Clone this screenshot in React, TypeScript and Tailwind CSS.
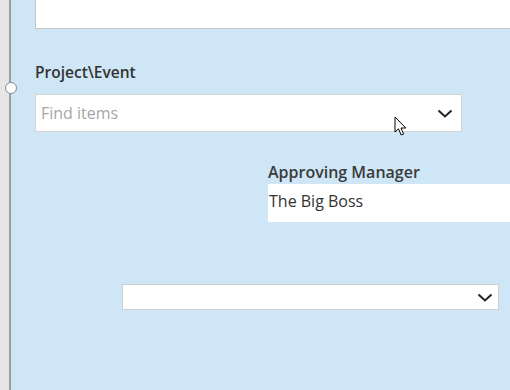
import React from "react";

function Chevron({ className }: { className?: string }) {
  return (
    <svg viewBox="0 0 16 9" className={className} fill="none">
      <path d="M1.5 1.5 L8 7.5 L14.5 1.5" stroke="#222" strokeWidth="2" />
    </svg>
  );
}

function Cursor() {
  return (
    <svg width="14" height="22" viewBox="0 0 14 22" className="absolute left-[394px] top-[116px]">
      <path
        d="M1 1 L1 16 L4.5 12.8 L7.2 19 L9.6 18 L7 12 L11.8 12 Z"
        fill="#fff"
        stroke="#000"
        strokeWidth="1"
        strokeLinejoin="round"
      />
    </svg>
  );
}

export default function App() {
  return (
    <div
      className="relative flex h-[390px] w-[510px] overflow-hidden bg-[#cee6f6] text-[#333]"
      style={{ fontFamily: '"Open Sans", "Noto Sans", sans-serif' }}
    >
      {/* left rail */}
      <div className="w-[9px] shrink-0 bg-[#e6e6e6]" />
      <div className="w-[2px] shrink-0 bg-[#9c9c9c]" />

      {/* form canvas */}
      <div className="flex flex-1 flex-col pl-[24px]">
        <div className="h-[29px] border-b border-l border-[#c6c6c6] bg-white" />

        <label className="mt-[32px] text-[15.5px] font-semibold leading-[22px] text-[#333]">Project\Event</label>
        <div className="mt-[11px] flex h-[38px] w-[427px] items-center justify-between border border-[#d4d4d4] bg-white pl-[5px] pr-[8px]">
          <span className="text-[16px] text-[#a6a6a6]">Find items</span>
          <Chevron className="h-[9px] w-[16px]" />
        </div>

        <div className="ml-[233px] mt-[28px] flex flex-col">
          <label className="text-[16px] font-semibold leading-[24px] text-[#3b3b3b]">Approving Manager</label>
          <div className="flex h-[38px] items-center bg-white pb-[4px] pl-[1px]">
            <span className="text-[16px] text-[#333]">The Big Boss</span>
          </div>
        </div>

        <div className="ml-[87px] mr-[11px] mt-[62px] flex h-[26px] items-center justify-end border border-[#cfcfcf] bg-white pr-[5px]">
          <Chevron className="h-[9px] w-[16px]" />
        </div>
      </div>

      {/* resize handle */}
      <div className="absolute left-[5px] top-[82px] h-[12px] w-[12px] rounded-full border border-[#8a8a8a] bg-white" />
      <Cursor />
    </div>
  );
}
